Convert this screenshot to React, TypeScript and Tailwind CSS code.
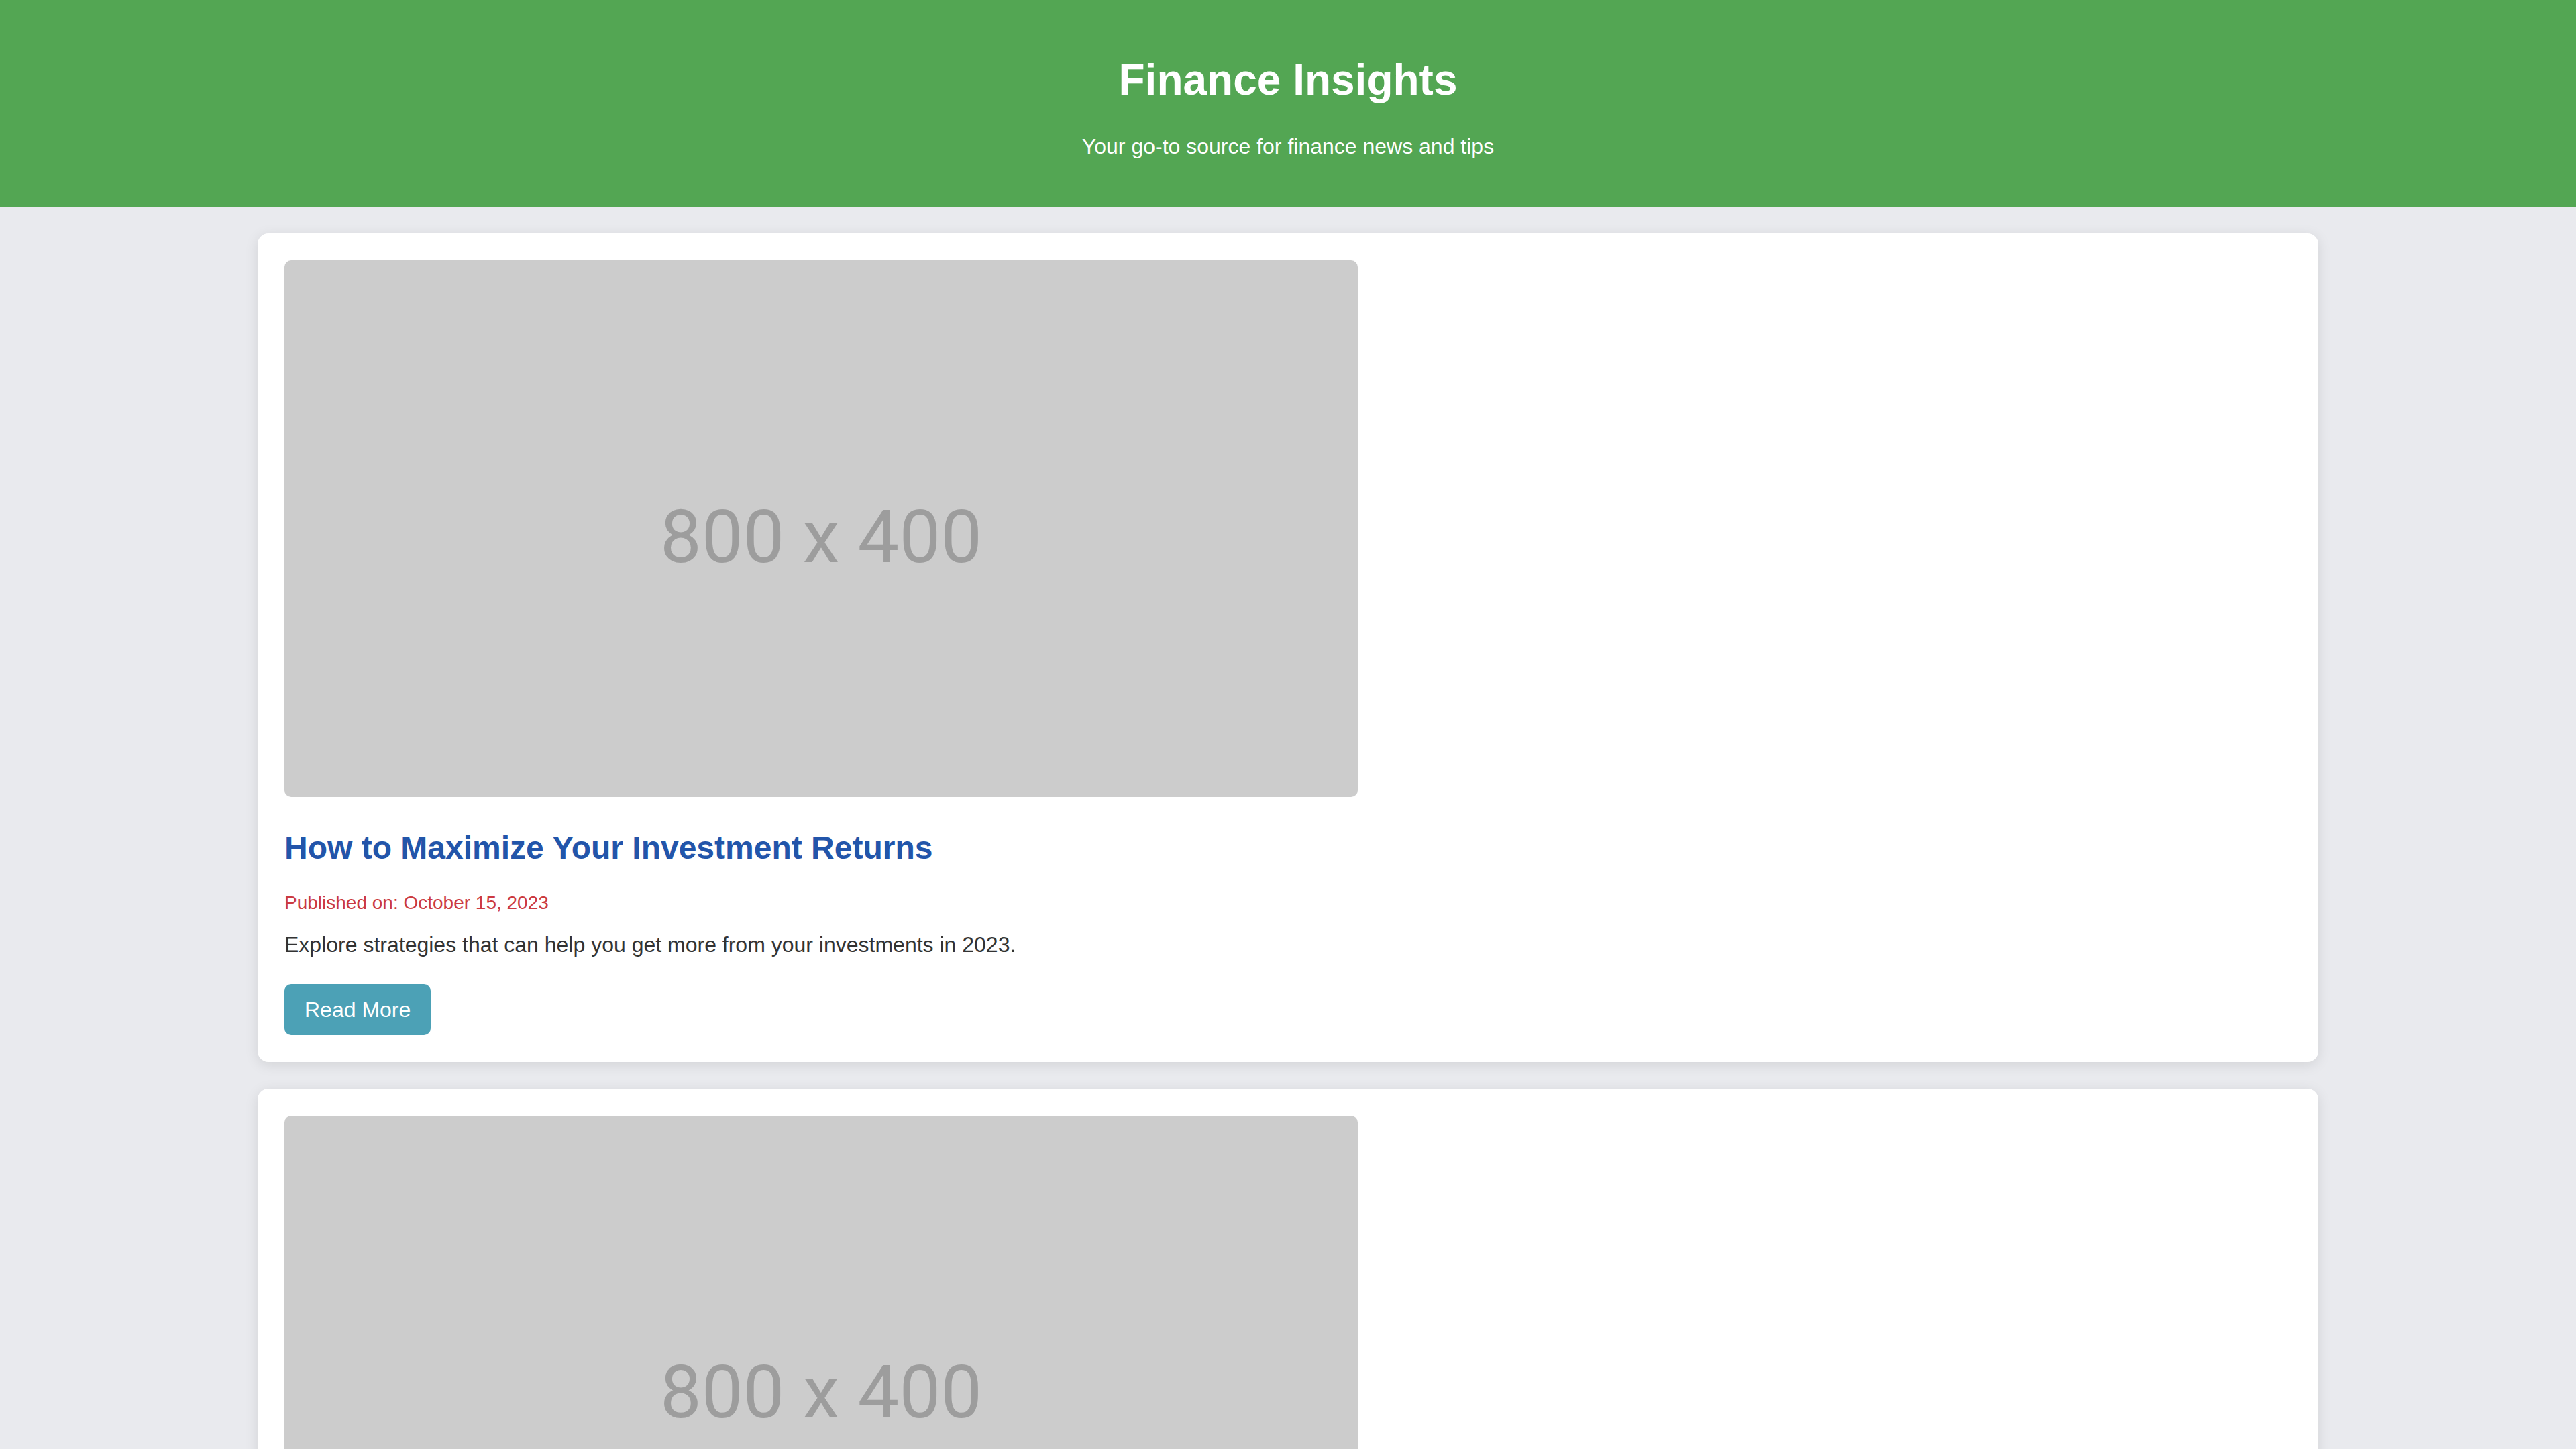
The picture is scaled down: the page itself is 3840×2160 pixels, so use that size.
import React from 'react';

interface Article {
  id: number;
  title: string;
  date: string;
  summary: string;
}

const articles: Article[] = [
  {
    id: 1,
    title: 'How to Maximize Your Investment Returns',
    date: 'October 15, 2023',
    summary: 'Explore strategies that can help you get more from your investments in 2023.',
  },
  {
    id: 2,
    title: 'Understanding Market Volatility',
    date: 'October 10, 2023',
    summary: 'Learn what drives market swings and how to keep your portfolio steady.',
  },
];

function Placeholder() {
  return (
    <div className="w-[1600px] h-[800px] bg-[#cccccc] rounded-[10px] flex items-center justify-center pt-6">
      <span className="font-['Roboto',sans-serif] text-[110px] text-[#9d9d9d]">800 x 400</span>
    </div>
  );
}

function ArticleCard({ article }: { article: Article }) {
  return (
    <article className="bg-white rounded-2xl p-10 shadow-[0_4px_20px_rgba(0,0,0,0.1)]">
      <Placeholder />
      <h2 className="mt-12 text-5xl font-bold leading-[1.15] text-[#2255aa]">{article.title}</h2>
      <p className="mt-[38px] text-[28px] leading-[1.15] text-[#cc3a40]">Published on: {article.date}</p>
      <p className="mt-7 text-[32px] leading-[1.15] text-[#333333]">{article.summary}</p>
      <button className="mt-10 px-[30px] py-5 rounded-[10px] bg-[#4ca1b6] text-white text-[32px] leading-[1.15]">
        Read More
      </button>
    </article>
  );
}

export default function App() {
  return (
    <div className="min-h-screen bg-[#e9eaee] font-['Liberation_Sans',Arial,sans-serif] pb-10">
      <header className="bg-[#53a653] text-white text-center py-10">
        <h1 className="my-[43px] text-[64px] font-bold leading-[1.15]">Finance Insights</h1>
        <p className="my-8 text-[32px] leading-[1.15]">Your go-to source for finance news and tips</p>
      </header>

      <main className="w-4/5 mx-auto pt-10 flex flex-col gap-10">
        {articles.map((a) => (
          <ArticleCard key={a.id} article={a} />
        ))}
      </main>
    </div>
  );
}
